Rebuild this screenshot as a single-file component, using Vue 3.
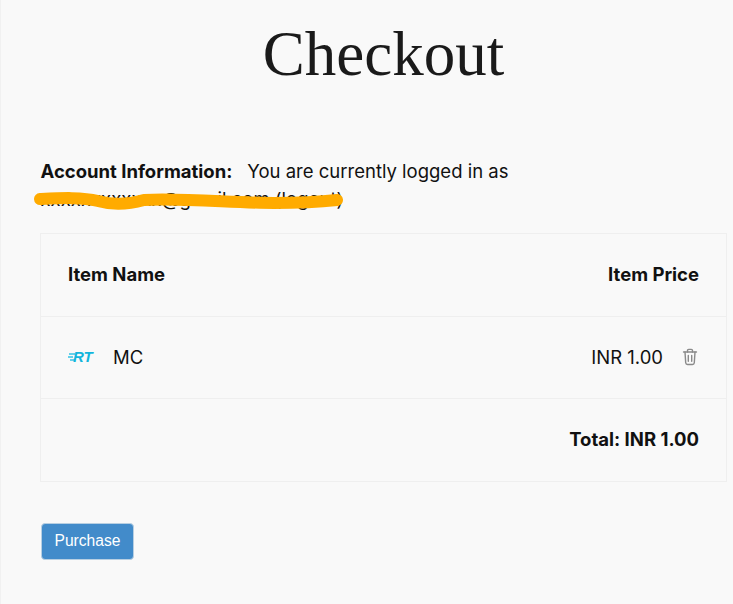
<template>
  <div class="checkout-page">
    <h1 class="page-title">Checkout</h1>
    <div class="account-info">
      <p class="account-text">
        <strong>Account Information:</strong>
        <span class="account-msg">You are currently logged in as</span>
        <br />
        <span class="account-mail">xxxxxxxxxxxx@gmail.com (logout)</span>
      </p>
      <!-- redaction scribble from the screenshot -->
      <svg class="scribble" viewBox="0 0 320 24" width="320" height="24" fill="none">
        <path d="M6 7C28 6 48 5 64 9C78 13 92 13 110 8C150 6 200 11 240 11C265 11 285 10 303 8" stroke="#ffab00" stroke-width="12" stroke-linecap="round" stroke-linejoin="round" />
      </svg>
    </div>
    <div class="cart-table">
      <div class="cart-row head-row">
        <span>Item Name</span>
        <span>Item Price</span>
      </div>
      <div class="cart-row" v-for="item in items" :key="item.name">
        <div class="item-name">
          <svg class="item-logo" viewBox="0 0 27 12" width="27" height="12">
            <path d="M1 3h6M0 6h5M2 9h5" stroke="#35c3e6" stroke-width="1.6" />
            <text x="5" y="11" class="logo-text">RT</text>
          </svg>
          <span>{{ item.name }}</span>
        </div>
        <div class="item-price">
          <span>{{ item.price }}</span>
          <svg class="trash" viewBox="0 0 16 18" width="16" height="18" fill="none" stroke="#8a8a8a" stroke-width="1.4" stroke-linecap="round" stroke-linejoin="round">
            <path d="M1.5 4h13" />
            <path d="M5.5 4V2.6c0-.7.5-1.2 1.2-1.2h2.6c.7 0 1.2.5 1.2 1.2V4" />
            <path d="M3 4l.7 10.8c.1 1 .8 1.7 1.8 1.7h5c1 0 1.7-.7 1.8-1.7L13 4" />
            <path d="M6.3 7.5v5.8M9.7 7.5v5.8" />
          </svg>
        </div>
      </div>
      <div class="cart-row total-row">
        <span>Total: {{ total }}</span>
      </div>
    </div>
    <button class="purchase-btn">Purchase</button>
  </div>
</template>

<script setup>
const items = [{ name: 'MC', price: 'INR 1.00' }]
const total = 'INR 1.00'
</script>

<style>
html, body { margin: 0; background: #f9f9f9; }
</style>

<style scoped>
.checkout-page { box-sizing: border-box; width: 733px; height: 604px; overflow: hidden; padding: 0 6px 0 39px; background: #f9f9f9; border-left: 1px solid #f1f1f1; color: #111; font-family: Inter, "Liberation Sans", sans-serif; font-size: 18.5px; }
.page-title { margin: 0; padding-top: 15px; height: 148px; box-sizing: border-box; text-align: center; font-family: "Liberation Serif", serif; font-weight: 400; font-size: 63px; line-height: 78px; color: #1a1a1a; }
.account-info { position: relative; height: 85px; }
.account-text { margin: 0; width: 500px; line-height: 28px; padding-top: 9px; padding-left: 0.5px; }
.account-text strong { font-weight: 700; }
.account-msg { margin-left: 15px; }
.scribble { position: absolute; left: -6px; top: 44px; }
.cart-table { border: 1px solid #efefef; }
.cart-row { display: flex; justify-content: space-between; align-items: center; box-sizing: border-box; height: 82.5px; padding: 0 27px; border-top: 1px solid #efefef; }
.cart-row:first-child { border-top: none; height: 81.5px; }
.head-row, .total-row { padding-bottom: 1px; font-weight: 700; }
.item-name { display: flex; align-items: center; gap: 18px; }
.item-logo { overflow: visible; }
.logo-text { font: italic 700 15px "Liberation Sans", sans-serif; fill: #12b5dc; }
.item-price { display: flex; align-items: center; gap: 19px; }
.trash { margin-right: 1px; }
.total-row { justify-content: flex-end; }
.purchase-btn { display: block; margin-top: 41px; margin-left: 1px; width: 93px; height: 37px; padding: 0; background: #428bca; border: 1px solid #b8cfe2; border-radius: 4px; color: #fff; font-family: "Liberation Sans", sans-serif; font-size: 15.6px; }
</style>
